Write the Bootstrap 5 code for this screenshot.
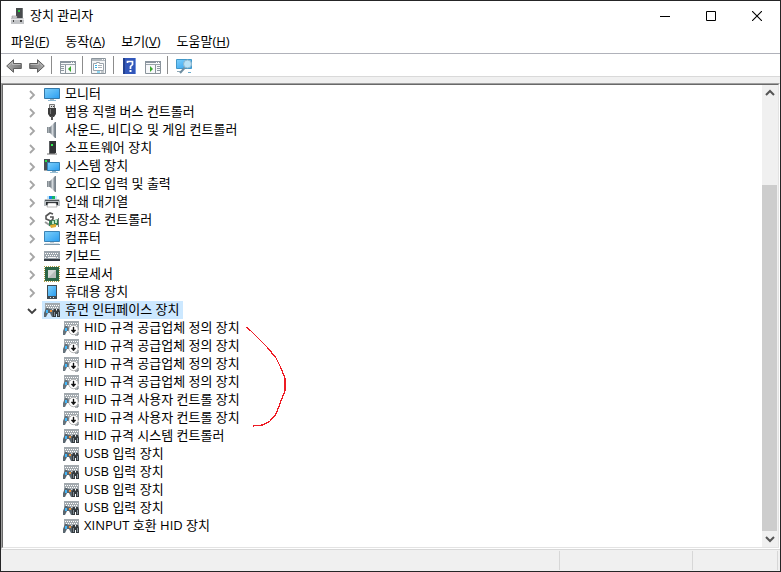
<!DOCTYPE html>
<html lang="ko">
<head>
<meta charset="utf-8">
<meta name="viewport" content="width=device-width, initial-scale=1">
<title>장치 관리자</title>
<link rel="stylesheet" href="https://cdn.jsdelivr.net/npm/bootstrap@5.3.0/dist/css/bootstrap.min.css">
<style>
body{font-family:"Open Sans","Noto Sans CJK KR",sans-serif;font-size:13px;line-height:18px;color:#000}
button{background:none;border:0;padding:0;color:inherit}
svg{display:block;flex:none}
.win{border:1px solid #252526}
.titlebar{height:29px;padding-left:8px}
.win-title{font-size:13px;line-height:18px;margin:0 auto 2px 5px}
.caption-btn{width:46px;height:29px;display:flex;align-items:center;justify-content:center}
.menubar{height:24px;padding:0 2px 1px;border-bottom:1px solid #b0b2ba}
.menubar button{padding:0 8px}
.toolbar{height:23px;padding-left:1px;border-bottom:1px solid #d9d9d9}
.tool{width:23px;height:22px;padding-top:2px;display:flex;align-items:center;justify-content:center}
.sep{width:1px;height:18px;background:#8c8c8c;margin:0 4px 0 3px}
.pane-frame{margin-top:6px;border:1px solid;border-color:#a0a0a0 #fff #fff #a0a0a0}
.pane{border:1px solid;border-color:#696969 #e3e3e3 #e3e3e3 #696969;min-height:0}
.face{background:#f0f0f0}
.tree{padding-left:21px}
.item{height:18px;display:flex;align-items:center}
.twisty{width:16px;height:18px;padding-top:2px;margin-right:2px;display:flex;align-items:center;justify-content:center}
.node{display:flex;align-items:center;height:18px;padding:0 4px 0 2px;white-space:nowrap}
.node svg{margin-right:5px}
.node span{padding-bottom:2px}
.sub-items{padding-left:37px}
.picked{background:#cce8ff}
.scroll{width:16px}
.scroll button{height:16px;width:15px;display:flex;align-items:center;justify-content:center}
.before-thumb{flex:84 0 0}
.thumb{flex:345 0 0;width:15px;background:#cdcdcd}
.statusbar{height:22px;border-top:1px solid #d7d7d7;padding:1px 2px 1px 0}
.cell{border-right:1px solid #d7d7d7}
.cell-a{width:133px}
.cell-b{width:85px}
.ink{position:absolute;left:244px;top:324px;pointer-events:none}
</style>
<script src="https://cdn.jsdelivr.net/npm/bootstrap@5.3.0/dist/js/bootstrap.bundle.min.js"></script>
</head>
<body>
<svg width="0" height="0" class="position-absolute" aria-hidden="true">
<defs>
<linearGradient id="blue" x1="0" y1="0" x2="1" y2="1"><stop offset="0" stop-color="#7fd0fa"/><stop offset="1" stop-color="#2a9df0"/></linearGradient>
<linearGradient id="metal" x1="0" y1="0" x2="1" y2="0"><stop offset="0" stop-color="#6f7880"/><stop offset=".5" stop-color="#d3d8dc"/><stop offset="1" stop-color="#707a84"/></linearGradient>
<linearGradient id="arrow" x1="0" y1="0" x2="1" y2="0"><stop offset="0" stop-color="#aaa"/><stop offset="1" stop-color="#777"/></linearGradient>
<symbol id="right" viewBox="0 0 8 10"><path d="M2 1l4 4-4 4" fill="none" stroke="#a6a6a6" stroke-width="1.8"/></symbol>
<symbol id="down" viewBox="0 0 10 8"><path d="M1 2l4 4 4-4" fill="none" stroke="#404040" stroke-width="1.8"/></symbol>
<symbol id="monitor" viewBox="0 0 16 16"><path d="M.5 2.500h15v10H.5z" fill="url(#blue)" stroke="#3478a8"/><path d="M6 13h4v1H6z" fill="#9eb4c2"/><path d="M4 14h8v1H4z" fill="#8fb9d2"/></symbol>
<symbol id="computer" viewBox="0 0 16 16"><path d="M.5 1.500h15v10H.5z" fill="url(#blue)" stroke="#3b83b5"/><path d="M6 12h4v1H6z" fill="#c5ced5"/><path d="M0 14h16v1H0z" fill="#7d98ab"/><path d="M1 13h14v1H1z" fill="#d4dde3"/></symbol>
<symbol id="usb" viewBox="0 0 16 16"><path d="M5.500.5h5v4h-5z" fill="#ddd" stroke="#777"/><path d="M7 2h1v1H7zM9 2h1v1H9z" fill="#444"/><path d="M4 4h8v6l-2 3H6l-2-3z" fill="#3c3c3c"/><path d="M6 5h1v5H6z" fill="#777"/><path d="M7 12h2v4H7z" fill="#555"/></symbol>
<symbol id="speaker" viewBox="0 0 16 16"><path d="M3 5h3v6H3z" fill="#858d93"/><path d="M6 5l5-5v16l-5-5z" fill="url(#metal)"/><path d="M11 0h1v16h-1z" fill="#78838c"/><path d="M4 5h1v6H4z" fill="#a9b0b5"/></symbol>
<symbol id="tower" viewBox="0 0 16 16"><path d="M5 1h7v12H5z" fill="#303234"/><path d="M5 1h1v12H5z" fill="#5a5d60"/><path d="M7 4h2v2H7z" fill="#30f050"/><path d="M3 13h10v2H3z" fill="#b6b6b6"/><path d="M5 13h6v1H5z" fill="#686868"/></symbol>
<symbol id="system" viewBox="0 0 16 16"><path d="M0 1h6v11H0z" fill="#474e53"/><path d="M1 2h2v2H1z" fill="#26e34c"/><path d="M0 12h5v1H0z" fill="#aaa"/><path d="M3.500 4.500h12v8h-12z" fill="url(#blue)" stroke="#3480b4"/><path d="M8 13h4v1H8z" fill="#8caec2"/><path d="M6 14h8v1H6z" fill="#98bed4"/></symbol>
<symbol id="printer" viewBox="0 0 16 16"><path d="M3 2h10v4H3z" fill="#c4e7f9"/><path d="M5 2h6v3H5z" fill="#1685e2"/><path d="M8 2h3v3H8z" fill="#15b763"/><path d="M1 5h14l1 2v5H0V7z" fill="#b8bdc0"/><path d="M1 6h14v1H1z" fill="#50575b"/><path d="M2 8h12v3H2z" fill="#24292c"/><path d="M4 9h8l1 4H3z" fill="#fff" stroke="#777" stroke-width=".5"/></symbol>
<symbol id="storage" viewBox="0 0 16 16"><path d="M9 2L6 1 2 4v3l5 2 2-2V5H6" fill="none" stroke="#555" stroke-width="1.600"/><path d="M1 10l6 4" stroke="#999" stroke-width="2"/><path d="M5 9l10-2v6L5 14z" fill="#347f54"/><path d="M8 9h2v3H8zM11 8h2v3h-2z" fill="#c0eac7"/><path d="M6 13l6-1v3l-5 1z" fill="#e4ad32"/><path d="M14 6h1v9h-1z" fill="#727b79"/></symbol>
<symbol id="keyboard" viewBox="0 0 16 16"><path d="M0 3h16v10H0z" fill="#9ba4ac"/><path d="M0 11h16v2H0z" fill="#333a42"/><path d="M1 5.500h14M2 7.500h12M1 9.500h2M13 9.500h2" stroke="#fff" stroke-dasharray="1 1"/><path d="M4 9h8v1H4z" fill="#f5f5f5"/></symbol>
<symbol id="cpu" viewBox="0 0 16 16"><path d="M.5 0v16M15.500 0v16M0 .5h16M0 15.500h16" stroke="#ad9d46" stroke-dasharray="1 1"/><path d="M1 1h14v14H1z" fill="#2b6546"/><path d="M4 4h8v8H4z" fill="#d6d9d8"/><path d="M4 12l8-8v8z" fill="#b9bdbb"/></symbol>
<symbol id="portable" viewBox="0 0 16 16"><path d="M3 1h10v14H3z" fill="#414c54"/><path d="M4 2h8v10H4z" fill="url(#blue)"/><path d="M6 13h1v1H6zM9 13h1v1H9z" fill="#dfe5e8"/></symbol>
<symbol id="keys" viewBox="0 0 16 16"><path d="M1 1h15v9H1z" fill="#a2a9ae"/><path d="M2 3.500h13M3 5.500h12M2 7.500h13" stroke="#fff" stroke-dasharray="1 1"/></symbol>
<symbol id="hid" viewBox="0 0 16 16"><use href="#keys"/><path d="M0 15v-4l2-5h2l1 1h2l2 1 1 7H8l-2-4H4l-2 4z" fill="#59666f"/><path d="M2 8h2v3H2z" fill="#42b5f7"/><path d="M6 8h2v2H6z" fill="#ee923b"/><path d="M9 14V9l1-2h2v2h1V7h2l1 3v5h-3v-3h-1v3H9z" fill="#343a3e"/><path d="M10 10h1v4h-1zM14 10h1v4h-1z" fill="#85919a"/></symbol>
<symbol id="hidoff" viewBox="0 0 16 16"><use href="#keys"/><path d="M0 15v-4l2-5h2l2 2v3H4l-2 4z" fill="#65727b"/><path d="M2 8h2v3H2z" fill="#43b8fa"/><path d="M15 12v3h-3" fill="none" stroke="#59636b"/><circle cx="10.500" cy="10" r="4.700" fill="#fff" stroke="#9b9b9b" stroke-width=".7"/><path d="M10 7h1v3h2l-2.500 3L8 10h2z" fill="#111" stroke="#111" stroke-width=".4"/></symbol>
<symbol id="back" viewBox="0 0 16 14"><path d="M.7 7L7.500.7v3.800h7.800v5H7.500v3.800z" fill="url(#arrow)" stroke="#5f5f5f"/><path d="M2.500 7l4-4v2.500h8" fill="none" stroke="#c4c4c4" stroke-width=".8"/></symbol>
<symbol id="frame" viewBox="0 0 16 13"><path d="M.5.5h15v12H.5z" fill="#f7f8fa" stroke="#8b949c"/><path d="M0 0h16v2H0z" fill="#8b959f"/><path d="M11 1h1v1h-1zM13 1h1v1h-1z" fill="#fff"/><path d="M1 3.500h14" stroke="#9ba4ac"/></symbol>
</defs>
</svg>
<div class="win vh-100 d-flex flex-column bg-white position-relative overflow-hidden">
<header class="titlebar d-flex align-items-center flex-shrink-0">
<svg width="16" height="18" viewBox="0 0 16 18" aria-hidden="true"><path d="M7 1h7v11H7z" fill="#484b4d"/><path d="M13 1h1v11h-1z" fill="#76797b"/><path d="M9 3h2v2H9z" fill="#25cf3e"/><path d="M3 9h5v2H3z" fill="#ddd" stroke="#777" stroke-width=".5"/><path d="M2 11h12l1 1v5H2z" fill="#c2c4c7"/><path d="M2 12h13v1H2z" fill="#e8e8e8"/><path d="M4 13h1v2H4zM11 13h2v2h-2z" fill="#454545"/></svg>
<h1 class="win-title fw-normal">장치 관리자</h1>
<button class="caption-btn" aria-label="최소화"><svg width="10" height="10"><path d="M0 5.500h10" stroke="#000"/></svg></button>
<button class="caption-btn" aria-label="최대화"><svg width="10" height="10"><path d="M.5.5h9v9h-9z" fill="none" stroke="#000"/></svg></button>
<button class="caption-btn" aria-label="닫기"><svg width="10" height="10"><path d="M0 0l10 10M10 0L0 10" stroke="#000" stroke-width="1.100"/></svg></button>
</header>
<nav class="menubar d-flex align-items-center flex-shrink-0" aria-label="메뉴">
<button>파일(<u>F</u>)</button><button>동작(<u>A</u>)</button><button>보기(<u>V</u>)</button><button>도움말(<u>H</u>)</button>
</nav>
<div class="toolbar d-flex align-items-center flex-shrink-0" role="toolbar" aria-label="도구 모음">
<button class="tool" aria-label="뒤로"><svg width="16" height="14"><use href="#back"/></svg></button>
<button class="tool" aria-label="앞으로"><svg width="16" height="14"><use href="#back" transform="translate(16 0) scale(-1 1)"/></svg></button>
<span class="sep"></span>
<button class="tool" aria-label="콘솔 트리 표시"><svg width="16" height="16" viewBox="0 -3 16 16"><use href="#frame" width="16" height="13"/><path d="M5.500 4v8" stroke="#8b949c"/><path d="M1 5.500h3M1 7.500h3M1 9.500h3" stroke="#8f99a2"/><path d="M11 5v6L8 8z" fill="#39a82b"/></svg></button>
<span class="sep"></span>
<button class="tool" aria-label="속성"><svg width="15" height="16"><path d="M.5.5h14v15H.5z" fill="#f5f6f7" stroke="#8b949c"/><path d="M1 1h13v2H1z" fill="#b1b8be"/><path d="M11 1h1v1h-1zM13 1h1v1h-1z" fill="#fff"/><path d="M2.500 5.500h3v-1h3v1h4v7h-10z" fill="#fff" stroke="#9ba4ac"/><path d="M4 7.500h2M4 9.500h2" stroke="#34b2e8"/><path d="M7 7.500h4M7 9.500h4" stroke="#aab1b7"/><path d="M6 14h3" stroke="#22b6ed"/><path d="M10 14h3" stroke="#929aa0"/></svg></button>
<span class="sep"></span>
<button class="tool" aria-label="도움말"><svg width="13" height="16"><path d="M0 0h13v16H0z" fill="#3257ba"/><path d="M0 0h2v16H0z" fill="#23418f"/><path d="M12 0h1v16h-1z" fill="#7797df"/><path d="M4.500 5V3.500h5v3l-2 2v2.500" fill="none" stroke="#fff" stroke-width="1.700"/><path d="M6.500 12h2v2h-2z" fill="#fff"/></svg></button>
<button class="tool" aria-label="작업 창"><svg width="16" height="16" viewBox="0 -3 16 16"><use href="#frame" width="16" height="13"/><path d="M10.500 4v8" stroke="#8b949c"/><path d="M12 5.500h3M12 7.500h3M12 9.500h3" stroke="#8f99a2"/><path d="M5 5v6l3-3z" fill="#39a82b"/></svg></button>
<span class="sep"></span>
<button class="tool" aria-label="하드웨어 변경 사항 검색"><svg width="16" height="16"><path d="M.5 1.500h15v9H.5z" fill="url(#blue)" stroke="#4198c9"/><path d="M1 13.500h5" stroke="#8fa8b7"/><path d="M9 9.500L4 15" stroke="#6f8fa3" stroke-width="2"/><circle cx="11.500" cy="6" r="4" fill="#b8e2f7" stroke="#8fb6cc"/><path d="M12 14.500h3" stroke="#6aaacb"/></svg></button>
</div>
<main class="face flex-grow-1 d-flex flex-column overflow-hidden">
<div class="pane-frame flex-grow-1 d-flex overflow-hidden">
<div class="pane flex-grow-1 d-flex bg-white overflow-hidden">
<ul class="tree list-unstyled m-0 flex-grow-1 overflow-hidden" id="tree" role="tree" aria-label="장치"></ul>
<div class="scroll face d-flex flex-column flex-shrink-0">
<button aria-label="위로 스크롤"><svg width="10" height="8"><path d="M1 6l4-4 4 4" fill="none" stroke="#555" stroke-width="2"/></svg></button>
<div class="before-thumb"></div><div class="thumb"></div>
<button aria-label="아래로 스크롤"><svg width="10" height="8"><path d="M1 2l4 4 4-4" fill="none" stroke="#555" stroke-width="2"/></svg></button>
</div>
</div>
</div>
</main>
<footer class="statusbar face d-flex flex-shrink-0"><div class="cell flex-grow-1"></div><div class="cell cell-a"></div><div class="cell cell-b"></div></footer>
<svg class="ink" width="44" height="104" aria-hidden="true"><path d="M1 2L6 6L14 14L22 22L31 33L36 43L40 53V66L36 76L31 89L25 96L18 100L8 101" fill="none" stroke="#ed1c24" stroke-width="1.300" stroke-linejoin="round" shape-rendering="crispEdges"/></svg>
</div>
<script>
const groups=[["monitor","모니터"],["usb","범용 직렬 버스 컨트롤러"],["speaker","사운드, 비디오 및 게임 컨트롤러"],["tower","소프트웨어 장치"],["system","시스템 장치"],["speaker","오디오 입력 및 출력"],["printer","인쇄 대기열"],["storage","저장소 컨트롤러"],["computer","컴퓨터"],["keyboard","키보드"],["cpu","프로세서"],["portable","휴대용 장치"],["hid","휴먼 인터페이스 장치"]];
const devices=[["hidoff","HID 규격 공급업체 정의 장치"],["hidoff","HID 규격 공급업체 정의 장치"],["hidoff","HID 규격 공급업체 정의 장치"],["hidoff","HID 규격 공급업체 정의 장치"],["hidoff","HID 규격 사용자 컨트롤 장치"],["hidoff","HID 규격 사용자 컨트롤 장치"],["hid","HID 규격 시스템 컨트롤러"],["hid","USB 입력 장치"],["hid","USB 입력 장치"],["hid","USB 입력 장치"],["hid","USB 입력 장치"],["hid","XINPUT 호환 HID 장치"]];
const node=([icon,name],picked)=>`<div class="node${picked?" picked":""}"><svg width="16" height="16" aria-hidden="true"><use href="#${icon}"/></svg><span>${name}</span></div>`;
document.getElementById("tree").innerHTML=groups.map((g,i)=>{
  const open=i===groups.length-1;
  return `<li role="treeitem" aria-expanded="${open}"><div class="item"><button class="twisty" aria-label="${g[1]} ${open?"접기":"펼치기"}">${open?'<svg width="10" height="8"><use href="#down"/></svg>':'<svg width="8" height="10"><use href="#right"/></svg>'}</button>${node(g,open)}</div>${open?'<ul class="sub-items list-unstyled m-0" role="group">'+devices.map(d=>`<li role="treeitem" class="item">${node(d,false)}</li>`).join("")+"</ul>":""}</li>`;
}).join("");
</script>
</body>
</html>
